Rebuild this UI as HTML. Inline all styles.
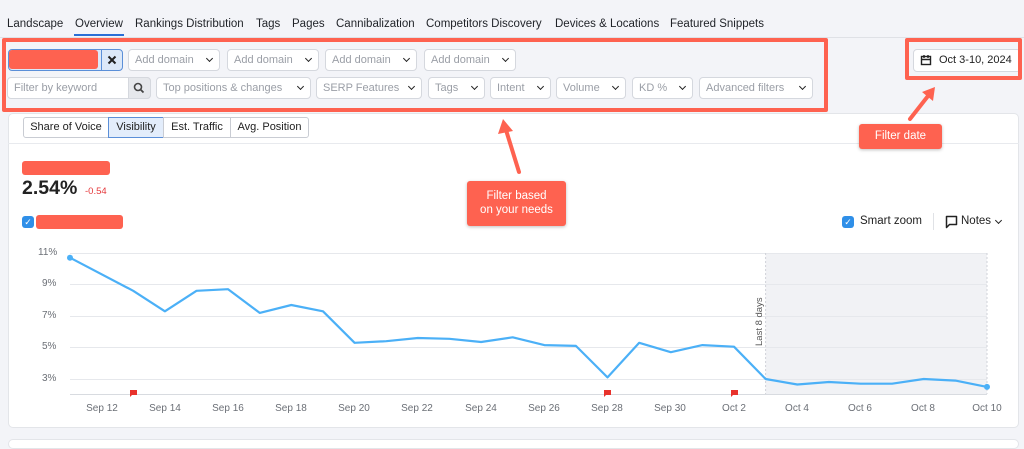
<!DOCTYPE html>
<html><head><meta charset="utf-8"><style>
*{box-sizing:border-box;margin:0;padding:0}
body{width:1024px;height:445px;overflow:hidden;background:#f3f4f8;font-family:"Liberation Sans",sans-serif;color:#222;position:relative}
.a{position:absolute}
.tab{position:absolute;top:18px;font-size:11.5px;color:#1f2227}
.inp{position:absolute;height:22px;background:#fff;border:1px solid #d5d8de;border-radius:4px;font-size:11px;color:#9a9ea6;padding:0 0 0 6px;line-height:20px;white-space:nowrap;overflow:hidden}
.inp i{position:absolute;right:7px;top:6px;width:5px;height:5px;border-right:1.8px solid #222;border-bottom:1.8px solid #222;transform:rotate(45deg)}
.seg{position:absolute;top:117px;height:21px;border:1px solid #c9ccd3;background:#fff;font-size:11px;line-height:19px;text-align:center;color:#222}
.red{background:#fe6250;border-radius:3px}
.yl{position:absolute;left:38px;font-size:10px;color:#6b6f76}
.xl{position:absolute;top:403px;font-size:10px;color:#6b6f76;width:50px;text-align:center}
</style></head><body>
<div class="tab" style="left:7px">Landscape</div>
<div class="tab" style="left:75px">Overview</div>
<div class="a" style="left:74px;top:34px;width:50px;height:2px;background:#2a6fd6"></div>
<div class="tab" style="left:135px">Rankings Distribution</div>
<div class="tab" style="left:256px">Tags</div>
<div class="tab" style="left:292px">Pages</div>
<div class="tab" style="left:336px">Cannibalization</div>
<div class="tab" style="left:426px">Competitors Discovery</div>
<div class="tab" style="left:555px">Devices &amp; Locations</div>
<div class="tab" style="left:670px">Featured Snippets</div>
<div class="a" style="left:0;top:37px;width:1024px;height:1px;background:#dfe1e6"></div>

<!-- row 1 -->
<div class="a" style="left:8px;top:49px;width:115px;height:22px;border:1px solid #5b8fd8;border-radius:4px;background:#dce8f8"></div>
<div class="a red" style="left:9px;top:50px;width:89px;height:19px"></div>
<div class="a" style="left:101px;top:49px;width:22px;height:22px;border-left:1px solid #5b8fd8"></div>
<svg class="a" style="left:107px;top:55px" width="10" height="10"><path d="M1.5 1.5l7 7M8.5 1.5l-7 7" stroke="#222" stroke-width="2"/></svg>
<div class="inp" style="left:128px;top:49px;width:92px">Add domain<i></i></div>
<div class="inp" style="left:227px;top:49px;width:92px">Add domain<i></i></div>
<div class="inp" style="left:325px;top:49px;width:92px">Add domain<i></i></div>
<div class="inp" style="left:424px;top:49px;width:92px">Add domain<i></i></div>
<!-- row 2 -->
<div class="inp" style="left:7px;top:77px;width:144px">Filter by keyword</div>
<div class="a" style="left:128px;top:77px;width:23px;height:22px;background:#e6e8ec;border:1px solid #d5d8de;border-radius:0 4px 4px 0"><svg width="21" height="20"><circle cx="9" cy="9" r="3.5" fill="none" stroke="#444" stroke-width="1.6"/><path d="M11.5 11.5l3 3" stroke="#444" stroke-width="1.8"/></svg></div>
<div class="inp" style="left:156px;top:77px;width:155px">Top positions &amp; changes<i></i></div>
<div class="inp" style="left:316px;top:77px;width:106px">SERP Features<i></i></div>
<div class="inp" style="left:428px;top:77px;width:57px">Tags<i></i></div>
<div class="inp" style="left:490px;top:77px;width:61px">Intent<i></i></div>
<div class="inp" style="left:556px;top:77px;width:70px">Volume<i></i></div>
<div class="inp" style="left:632px;top:77px;width:61px">KD %<i></i></div>
<div class="inp" style="left:699px;top:77px;width:114px">Advanced filters<i></i></div>

<!-- date -->
<div class="a" style="left:913px;top:49px;width:108px;height:23px;background:#fff;border:1px solid #d5d8de;border-radius:4px;font-size:11px;line-height:21px;padding-left:25px;color:#222;white-space:nowrap">Oct 3-10, 2024</div>
<svg class="a" style="left:920px;top:54px" width="12" height="12"><rect x="1.5" y="2.5" width="9" height="8" fill="none" stroke="#222" stroke-width="1.4"/><path d="M1.5 5.5h9M4 1v3M8 1v3" stroke="#222" stroke-width="1.4"/></svg>

<!-- card -->
<div class="a" style="left:8px;top:113px;width:1011px;height:315px;background:#fff;border:1px solid #e3e5e9;border-radius:5px"></div>
<div class="a" style="left:8px;top:143px;width:1011px;height:1px;background:#e8eaee"></div>
<div class="a" style="left:8px;top:439px;width:1011px;height:10px;background:#fff;border:1px solid #e3e5e9;border-radius:5px"></div>
<div class="seg" style="left:23px;width:86px;border-radius:3px 0 0 3px">Share of Voice</div>
<div class="seg" style="left:108px;width:56px;background:#e3edfb;border-color:#5b8fd8">Visibility</div>
<div class="seg" style="left:163px;width:68px">Est. Traffic</div>
<div class="seg" style="left:230px;width:79px;border-radius:0 3px 3px 0">Avg. Position</div>

<div class="a red" style="left:22px;top:161px;width:88px;height:14px"></div>
<div class="a" style="left:22px;top:177px;font-size:19.5px;font-weight:bold;color:#222">2.54%</div>
<div class="a" style="left:85px;top:186px;font-size:9.5px;color:#e5393c">-0.54</div>
<div class="a" style="left:22px;top:216px;width:12px;height:12px;background:#2f8fe8;border-radius:3px;color:#fff;font-size:9px;text-align:center;line-height:12px">✓</div>
<div class="a red" style="left:36px;top:215px;width:87px;height:14px"></div>

<div class="a" style="left:842px;top:216px;width:12px;height:12px;background:#2f8fe8;border-radius:3px;color:#fff;font-size:9px;text-align:center;line-height:12px">✓</div>
<div class="a" style="left:860px;top:215px;font-size:11.5px">Smart zoom</div>
<div class="a" style="left:933px;top:213px;width:1px;height:17px;background:#e0e2e6"></div>
<svg class="a" style="left:945px;top:215px" width="14" height="14"><path d="M1.5 1.5h10v8h-7l-3 3z" fill="none" stroke="#222" stroke-width="1.5" stroke-linejoin="round"/></svg>
<div class="a" style="left:961px;top:215px;font-size:11.5px">Notes</div>
<div class="a" style="left:996px;top:218px;width:5px;height:5px;border-right:1.6px solid #222;border-bottom:1.6px solid #222;transform:rotate(45deg)"></div>

<!-- chart -->
<svg class="a" style="left:0;top:0" width="1024" height="445">
<rect x="765.6" y="253" width="221.4" height="141" fill="#f1f2f5"/>
<g stroke="#e6e8ec" stroke-width="1">
<path d="M70 253.5H987M70 284.5H987M70 316.5H987M70 347.5H987M70 379.5H987"/></g>
<path d="M70 394.5H987" stroke="#d8dbe0"/>
<path d="M765.6 253V394M987 253V394" stroke="#cfd2d8" stroke-dasharray="2 2"/>
<text transform="translate(762,346) rotate(-90)" font-size="9.5" fill="#555" font-family="Liberation Sans">Last 8 days</text>
<polyline fill="none" stroke="#4bb0f7" stroke-width="2.2" stroke-linejoin="round" points="70,257.7 133.2,290.8 164.9,311.3 196.5,290.8 228.1,289.2 259.7,312.9 291.3,305 323,311.3 354.6,342.8 386.2,341.2 417.8,338 449.4,338.8 481.1,342 512.7,337.3 544.3,345.1 575.9,345.9 607.5,377.4 639.2,342.8 670.8,352.2 702.4,345.1 734,346.7 765.6,379 797.3,384.5 828.9,382 860.5,383.7 892.1,383.7 923.7,379 955.4,380.6 987,386.9"/>
<circle cx="70" cy="257.7" r="3" fill="#4bb0f7"/><circle cx="987" cy="386.9" r="3" fill="#4bb0f7"/>
<g fill="#e8322c"><path d="M130 390h7v5h-5l-2 2z"/><path d="M604 390h7v5h-5l-2 2z"/><path d="M731 390h7v5h-5l-2 2z"/></g>
</svg>
<div class="yl" style="top:247px">11%</div><div class="yl" style="top:278px;left:42px">9%</div><div class="yl" style="top:310px;left:42px">7%</div><div class="yl" style="top:341px;left:42px">5%</div><div class="yl" style="top:373px;left:42px">3%</div>
<div class="xl" style="left:77px">Sep 12</div><div class="xl" style="left:140px">Sep 14</div><div class="xl" style="left:203px">Sep 16</div><div class="xl" style="left:266px">Sep 18</div><div class="xl" style="left:329px">Sep 20</div><div class="xl" style="left:392px">Sep 22</div><div class="xl" style="left:456px">Sep 24</div><div class="xl" style="left:519px">Sep 26</div><div class="xl" style="left:582px">Sep 28</div><div class="xl" style="left:645px">Sep 30</div><div class="xl" style="left:709px">Oct 2</div><div class="xl" style="left:772px">Oct 4</div><div class="xl" style="left:835px">Oct 6</div><div class="xl" style="left:898px">Oct 8</div><div class="xl" style="left:962px">Oct 10</div>

<!-- annotations -->
<div class="a" style="left:2px;top:38px;width:826px;height:74px;border:4px solid #fe6250;border-radius:2px"></div>
<div class="a" style="left:905px;top:38px;width:117px;height:42px;border:4px solid #fe6250;border-radius:2px"></div>
<div class="a" style="left:467px;top:181px;width:99px;height:45px;background:#fe6250;border-radius:3px;color:#fff;font-size:11.5px;text-align:center;line-height:14px;padding-top:8px;box-shadow:0 1px 3px rgba(0,0,0,.25)">Filter based<br>on your needs</div>
<div class="a" style="left:859px;top:124px;width:83px;height:25px;background:#fe6250;border-radius:3px;color:#fff;font-size:11.5px;text-align:center;line-height:25px;box-shadow:0 1px 3px rgba(0,0,0,.25)">Filter date</div>
<svg class="a" style="left:0;top:0" width="1024" height="445">
<path d="M519 172L506 130" stroke="#fe6250" stroke-width="4" stroke-linecap="round"/>
<path d="M503 119L498 134L513 131z" fill="#fe6250"/>
<path d="M910 119L928 96" stroke="#fe6250" stroke-width="4" stroke-linecap="round"/>
<path d="M935 87L922 92L933 101z" fill="#fe6250"/>
</svg>
</body></html>
